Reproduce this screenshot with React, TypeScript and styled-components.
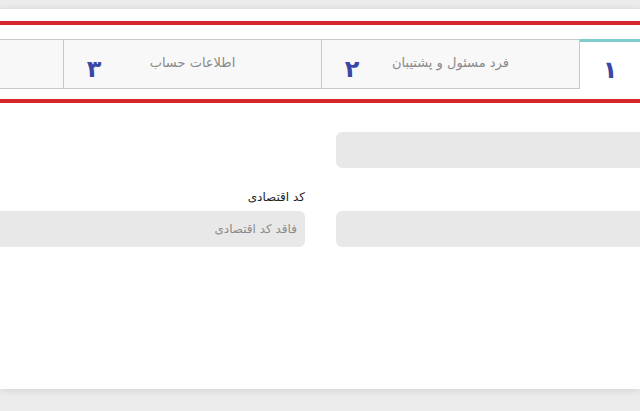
import styled, { createGlobalStyle } from "styled-components";

const GlobalStyle = createGlobalStyle`
  html, body {
    margin: 0;
    padding: 0;
    background: #ececec;
    font-family: "DejaVu Sans", "Noto Sans", sans-serif;
  }
  #root {
    height: 411px;
    overflow: hidden;
  }
`;

const Card = styled.div`
  margin-top: 9px;
  height: 380px;
  background: #fff;
  box-shadow: 0 1px 8px rgba(0, 0, 0, 0.12);
  overflow: hidden;
  direction: rtl;
`;

const Sheet = styled.div`
  width: 1100px;
  margin-right: -198px;
  padding-top: 12px;
`;

const RedRule = styled.div`
  height: 4px;
  background: #d8262d;
`;

const TabRow = styled.div`
  display: flex;
  margin: 14px 0 10px;
  height: 50px;
`;

const Tab = styled.div<{ $active?: boolean }>`
  box-sizing: border-box;
  flex: none;
  width: ${(p) => (p.$active ? "258px" : "259px")};
  height: 50px;
  display: grid;
  grid-template-columns: 60px 1fr 60px;
  align-items: center;
  background: ${(p) => (p.$active ? "#fff" : "#f8f8f8")};
  border: ${(p) => (p.$active ? "none" : "1px solid #c8c8c8")};
  border-top: ${(p) => (p.$active ? "3px solid #7fcbcd" : "1px solid #c8c8c8")};
  & + & + & {
    margin-right: -1px;
  }
`;

const TabLabel = styled.span`
  grid-column: 2;
  text-align: center;
  font-size: 13px;
  color: #8a8a8a;
  padding-bottom: 4px;
`;

const TabNumber = styled.span`
  grid-column: 3;
  text-align: center;
  font-size: 24px;
  font-weight: bold;
  color: #3a47a6;
  padding-top: 9px;
`;

const Form = styled.div`
  display: grid;
  grid-template-columns: 502px 502px;
  column-gap: 31px;
  row-gap: 20px;
  padding-top: 6px;
`;

const Group = styled.div`
  display: flex;
  flex-direction: column;
  gap: 5px;
`;

const Label = styled.label`
  height: 18px;
  line-height: 18px;
  font-size: 12px;
  color: #222;
`;

const Field = styled.div`
  height: 36px;
  border-radius: 6px;
  background: #e8e8e8;
  display: flex;
  align-items: center;
  padding: 0 8px;
  font-size: 12px;
  color: #8a8a8a;
`;

// the fourth step lies mostly past the left edge, only its box shows
const tabs = [
  { n: "۱", label: "" },
  { n: "۲", label: "فرد مسئول و پشتیبان" },
  { n: "۳", label: "اطلاعات حساب" },
  { n: "", label: "" },
];

export default function App() {
  return (
    <>
      <GlobalStyle />
      <Card>
        <Sheet>
          <RedRule />
          <TabRow>
            {tabs.map((t, i) => (
              <Tab key={i} $active={i === 0}>
                <TabLabel>{t.label}</TabLabel>
                <TabNumber>{t.n}</TabNumber>
              </Tab>
            ))}
          </TabRow>
          <RedRule />
          <Form>
            <Group>
              <Label />
              <Field />
            </Group>
            <div />
            <Group>
              <Label />
              <Field />
            </Group>
            <Group>
              <Label>کد اقتصادی</Label>
              <Field>فاقد کد اقتصادی</Field>
            </Group>
          </Form>
        </Sheet>
      </Card>
    </>
  );
}
